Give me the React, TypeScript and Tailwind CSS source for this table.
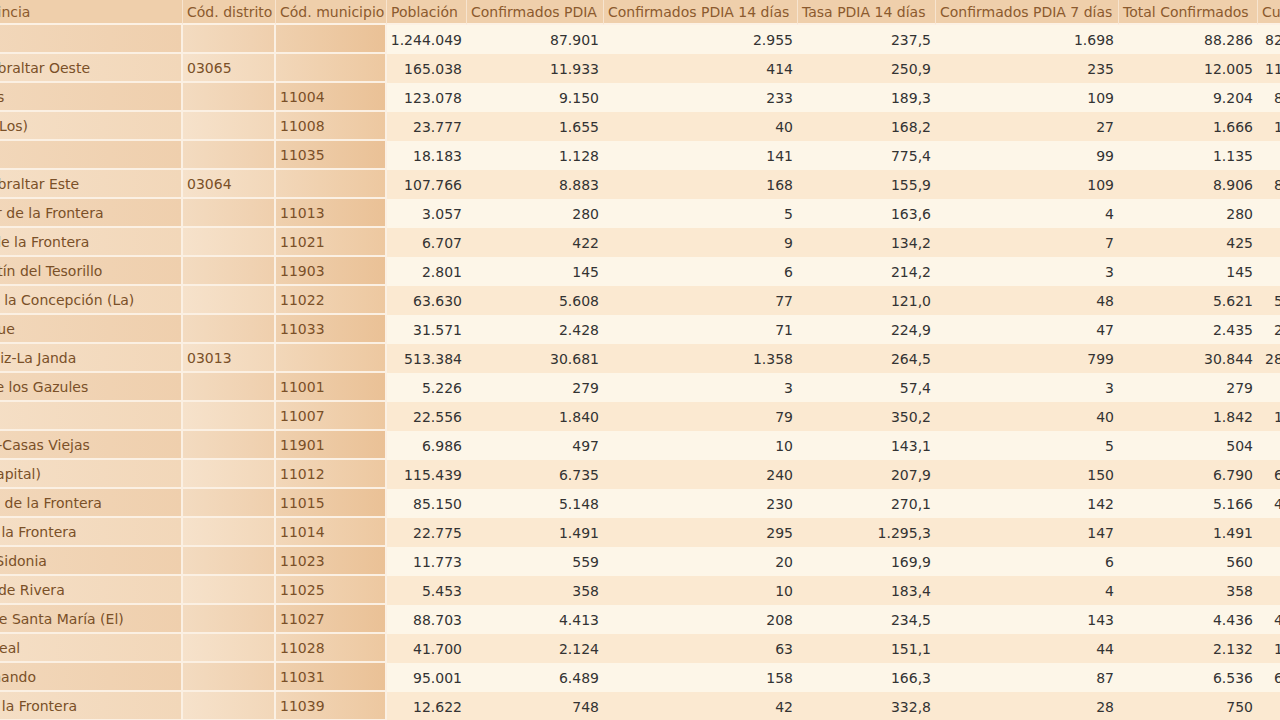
const rows = [
  { name: 'Cádiz', level: 0, dist: '', mun: '', v: ['1.244.049', '87.901', '2.955', '237,5', '1.698', '88.286', '82.519'] },
  { name: 'Campo de Gibraltar Oeste', level: 1, dist: '03065', mun: '', v: ['165.038', '11.933', '414', '250,9', '235', '12.005', '11.432'] },
  { name: 'Algeciras', level: 2, dist: '', mun: '11004', v: ['123.078', '9.150', '233', '189,3', '109', '9.204', '8.876'] },
  { name: 'Barrios (Los)', level: 2, dist: '', mun: '11008', v: ['23.777', '1.655', '40', '168,2', '27', '1.666', '1.602'] },
  { name: 'Tarifa', level: 2, dist: '', mun: '11035', v: ['18.183', '1.128', '141', '775,4', '99', '1.135', '954'] },
  { name: 'Campo de Gibraltar Este', level: 1, dist: '03064', mun: '', v: ['107.766', '8.883', '168', '155,9', '109', '8.906', '8.619'] },
  { name: 'Castellar de la Frontera', level: 2, dist: '', mun: '11013', v: ['3.057', '280', '5', '163,6', '4', '280', '271'] },
  { name: 'Jimena de la Frontera', level: 2, dist: '', mun: '11021', v: ['6.707', '422', '9', '134,2', '7', '425', '409'] },
  { name: 'San Martín del Tesorillo', level: 2, dist: '', mun: '11903', v: ['2.801', '145', '6', '214,2', '3', '145', '137'] },
  { name: 'Línea de la Concepción (La)', level: 2, dist: '', mun: '11022', v: ['63.630', '5.608', '77', '121,0', '48', '5.621', '5.469'] },
  { name: 'San Roque', level: 2, dist: '', mun: '11033', v: ['31.571', '2.428', '71', '224,9', '47', '2.435', '2.318'] },
  { name: 'Bahía de Cádiz-La Janda', level: 1, dist: '03013', mun: '', v: ['513.384', '30.681', '1.358', '264,5', '799', '30.844', '28.911'] },
  { name: 'Alcalá de los Gazules', level: 2, dist: '', mun: '11001', v: ['5.226', '279', '3', '57,4', '3', '279', '271'] },
  { name: 'Barbate', level: 2, dist: '', mun: '11007', v: ['22.556', '1.840', '79', '350,2', '40', '1.842', '1.738'] },
  { name: 'Benalup-Casas Viejas', level: 2, dist: '', mun: '11901', v: ['6.986', '497', '10', '143,1', '5', '504', '488'] },
  { name: 'Cádiz (capital)', level: 2, dist: '', mun: '11012', v: ['115.439', '6.735', '240', '207,9', '150', '6.790', '6.431'] },
  { name: 'Chiclana de la Frontera', level: 2, dist: '', mun: '11015', v: ['85.150', '5.148', '230', '270,1', '142', '5.166', '4.872'] },
  { name: 'Conil de la Frontera', level: 2, dist: '', mun: '11014', v: ['22.775', '1.491', '295', '1.295,3', '147', '1.491', '987'] },
  { name: 'Medina Sidonia', level: 2, dist: '', mun: '11023', v: ['11.773', '559', '20', '169,9', '6', '560', '531'] },
  { name: 'Paterna de Rivera', level: 2, dist: '', mun: '11025', v: ['5.453', '358', '10', '183,4', '4', '358', '342'] },
  { name: 'Puerto de Santa María (El)', level: 2, dist: '', mun: '11027', v: ['88.703', '4.413', '208', '234,5', '143', '4.436', '4.157'] },
  { name: 'Puerto Real', level: 2, dist: '', mun: '11028', v: ['41.700', '2.124', '63', '151,1', '44', '2.132', '1.994'] },
  { name: 'San Fernando', level: 2, dist: '', mun: '11031', v: ['95.001', '6.489', '158', '166,3', '87', '6.536', '6.288'] },
  { name: 'Vejer de la Frontera', level: 2, dist: '', mun: '11039', v: ['12.622', '748', '42', '332,8', '28', '750', '701'] },
]

const headers = [
  'Provincia',
  'Cód. distrito',
  'Cód. municipio',
  'Población',
  'Confirmados PDIA',
  'Confirmados PDIA 14 días',
  'Tasa PDIA 14 días',
  'Confirmados PDIA 7 días',
  'Total Confirmados',
  'Curados',
]

const widths = ['w-[283px]', 'w-[93px]', 'w-[111px]', 'w-[80px]', 'w-[137px]', 'w-[194px]', 'w-[138px]', 'w-[183px]', 'w-[139px]', 'w-[61px]']

const indent = ['pl-[6px]', 'pl-[7px]', 'pl-[40px]']

export default function App() {
  return (
    <div className="w-[1280px] h-[720px] overflow-hidden bg-[#fdf6e8] font-['DejaVu_Sans',sans-serif] text-[14px]">
      <table className="-ml-[100px] table-fixed border-separate border-spacing-0 w-[1419px]">
        <colgroup>
          {widths.map((w, i) => (
            <col key={i} className={w} />
          ))}
        </colgroup>
        <thead>
          <tr className="h-[25px]">
            {headers.map((h, i) => (
              <th
                key={h}
                className={`p-0 text-left font-normal leading-none whitespace-nowrap overflow-hidden text-[#8b5a2e] bg-[#efcfab] border-b-2 border-r border-b-[#fcf1e4] border-r-[#f7e4cf] ${i === 0 ? 'pl-[67px]' : 'pl-[4px]'}`}
              >
                {h}
              </th>
            ))}
          </tr>
        </thead>
        <tbody>
          {rows.map((r, idx) => {
            const even = idx % 2 === 0
            const leftBg = even ? 'from-[#f3dbc0] to-[#efcfad]' : 'from-[#f6e2cb] to-[#f2d7b9]'
            const codeBg = even ? 'from-[#efd0ae] to-[#eac196]' : 'from-[#f2d7b9] to-[#edc8a0]'
            const numBg = even ? 'bg-[#fdf6e8]' : 'bg-[#fbe9d1]'
            return (
              <tr key={r.name} className="h-[29px]">
                <td className={`p-0 bg-linear-to-r ${leftBg} border-r-2 border-b-2 border-[#fbf0e3] text-[#7a5028] whitespace-nowrap overflow-hidden leading-none`}>
                  <div className={indent[r.level]}>{r.name}</div>
                </td>
                <td className={`p-0 pl-[4px] bg-linear-to-r ${leftBg} border-r-2 border-b-2 border-[#fbf0e3] text-[#7a5028] leading-none`}>
                  {r.dist}
                </td>
                <td className={`p-0 pl-[4px] bg-linear-to-r ${codeBg} border-r-2 border-b-2 border-[#fbf0e3] text-[#7a5028] leading-none`}>
                  {r.mun}
                </td>
                {r.v.map((val, j) => (
                  <td key={j} className={`p-0 pr-[5px] text-right text-[#333333] leading-none whitespace-nowrap ${numBg}`}>
                    {val}
                  </td>
                ))}
              </tr>
            )
          })}
        </tbody>
      </table>
    </div>
  )
}
